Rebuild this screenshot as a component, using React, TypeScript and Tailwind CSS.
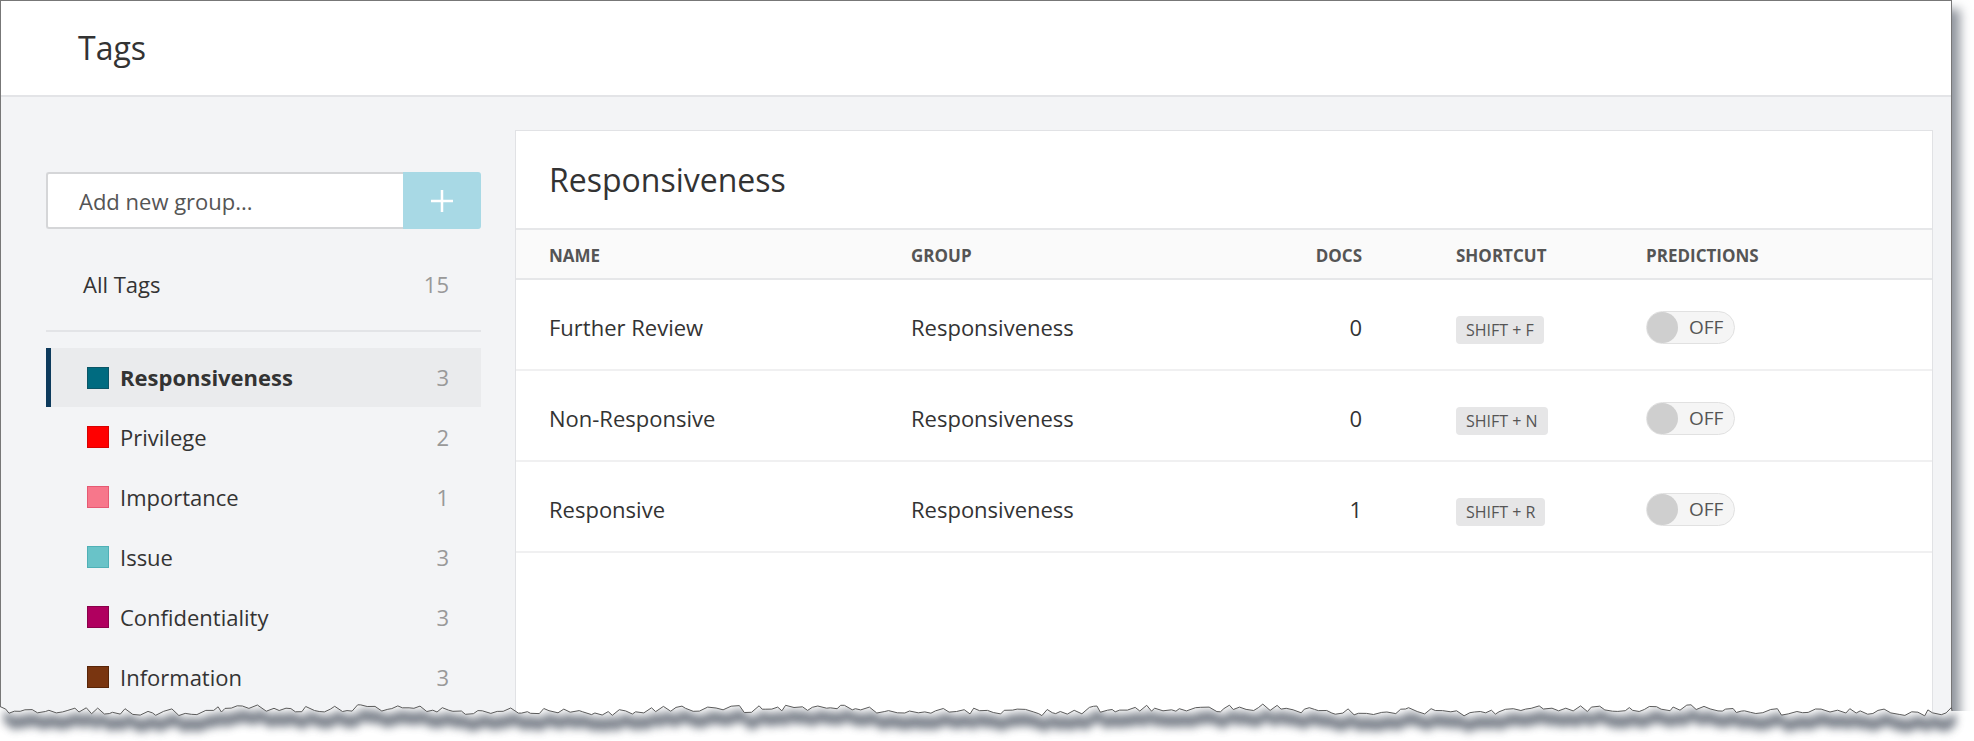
import React from 'react'

const groups = [
  { name: 'Responsiveness', count: 3, fill: 'bg-[#006b80]', edge: 'border-[#0b5566]', active: true },
  { name: 'Privilege', count: 2, fill: 'bg-[#ff0000]', edge: 'border-[#d80000]' },
  { name: 'Importance', count: 1, fill: 'bg-[#f7778b]', edge: 'border-[#e65a73]' },
  { name: 'Issue', count: 3, fill: 'bg-[#69c3c8]', edge: 'border-[#4fb0b6]' },
  { name: 'Confidentiality', count: 3, fill: 'bg-[#b0005f]', edge: 'border-[#8a004b]' },
  { name: 'Information', count: 3, fill: 'bg-[#793510]', edge: 'border-[#582508]' },
]

const tags = [
  { name: 'Further Review', docs: 0, key: 'F' },
  { name: 'Non-Responsive', docs: 0, key: 'N' },
  { name: 'Responsive', docs: 1, key: 'R' },
]

// jagged "torn paper" edge along the bottom of the screenshot
function tornEdge() {
  let seed = 11
  const rnd = () => {
    seed = (seed * 16807) % 2147483647
    return seed / 2147483647
  }
  const pts: [number, number][] = []
  let x = 0
  while (x < 1954) {
    const y = 18 + (rnd() - 0.5) * 7 + Math.sin(x / 70) * 2 + Math.sin(x / 23) * 1.2
    pts.push([x, y])
    x += 3 + rnd() * 6
  }
  pts.push([1952, 19])
  const line = pts.map((p, i) => `${i ? 'L' : 'M'}${p[0].toFixed(1)} ${p[1].toFixed(1)}`).join(' ')
  const area = `${line} L1974 19 L1974 60 L0 60 Z`
  const top = pts.map((p) => `${(p[0] + 4).toFixed(1)} ${(p[1] + 4).toFixed(1)}`)
  const bottom = pts
    .slice()
    .reverse()
    .map((p) => `${(p[0] + 4).toFixed(1)} ${(p[1] + 17).toFixed(1)}`)
  const shadow = `M${[...top, ...bottom].join(' L')} Z`
  return { line, area, shadow }
}

function TornEdge() {
  const { line, area, shadow } = tornEdge()
  return (
    <svg className="absolute left-0 top-[692px]" width="1974" height="60" viewBox="0 0 1974 60">
      <defs>
        <filter id="blur" x="-5%" y="-100%" width="110%" height="300%">
          <feGaussianBlur stdDeviation="4.5" />
        </filter>
        <clipPath id="below">
          <path d={area} />
        </clipPath>
      </defs>
      <path d={area} fill="#ffffff" />
      <g clipPath="url(#below)">
        <path d={shadow} fill="#5d6571" opacity="0.8" filter="url(#blur)" />
      </g>
      <path d={line} fill="none" stroke="#5a5a5a" strokeWidth="1" />
    </svg>
  )
}

function Toggle() {
  return (
    <div className="flex h-[33px] w-[89px] items-center rounded-full border border-[#e1e1e1] bg-[#f5f5f5]">
      <div className="h-[31px] w-[31px] rounded-full bg-[#cfcfcf]" />
      <span className="ml-[11px] text-[19px] text-[#555]">OFF</span>
    </div>
  )
}

export default function App() {
  return (
    <div className="relative h-[741px] w-[1974px] overflow-hidden bg-white font-['Open_Sans',sans-serif] text-[#333]">
      <div className="flex h-[741px] w-[1952px] flex-col border border-[#777] bg-white shadow-[8px_9px_10px_rgba(70,78,92,0.6)]">
        {/* page header */}
        <div className="flex h-[96px] shrink-0 items-center border-b-2 border-[#e3e4e7] pl-[77px]">
          <h1 className="text-[32px] leading-none">Tags</h1>
        </div>

        <div className="flex flex-1 gap-[34px] bg-[#f3f4f6] pl-[45px] pr-[18px] pt-[33px]">
          {/* group list */}
          <div className="w-[435px] shrink-0 pt-[42px]">
            <div className="flex h-[57px]">
              <div className="flex flex-1 items-center rounded-l-[3px] border-2 border-r-0 border-[#d5d6d8] bg-white pl-[31px] pt-[2px] text-[22px] text-[#555]">
                Add new group...
              </div>
              <button className="flex w-[78px] items-center justify-center rounded-r-[3px] bg-[#a8d9e5]">
                <svg width="24" height="24" viewBox="0 0 24 24">
                  <path d="M12 1v22M1 12h22" stroke="#fff" strokeWidth="2.5" />
                </svg>
              </button>
            </div>

            <div className="mt-[25px] flex h-[60px] items-center justify-between pl-[37px] pr-[32px] text-[22px]">
              <span>All Tags</span>
              <span className="text-[#999]">15</span>
            </div>
            <div className="mt-[16px] h-[2px] bg-[#e3e4e7]" />

            <div className="mt-[16px]">
              {groups.map((g) => (
                <div
                  key={g.name}
                  className={
                    g.active
                      ? 'flex h-[59px] items-center justify-between border-l-[5px] border-[#0d3a5c] bg-[#eaebed] pl-[36px] pr-[32px] text-[22px]'
                      : 'flex h-[60px] items-center justify-between pl-[41px] pr-[32px] text-[22px]'
                  }
                >
                  <div className="flex items-center gap-[11px]">
                    <span className={`h-[22px] w-[22px] border ${g.fill} ${g.edge}`} />
                    <span className={g.active ? 'font-bold text-[#333]' : ''}>{g.name}</span>
                  </div>
                  <span className="text-[#999]">{g.count}</span>
                </div>
              ))}
            </div>
          </div>

          {/* tag table */}
          <div className="flex-1 self-start border border-[#e1e2e5] bg-white">
            <div className="flex h-[97px] items-center pl-[33px]">
              <h2 className="text-[32px] leading-none">Responsiveness</h2>
            </div>
            <div className="grid h-[52px] grid-cols-[362px_339px_112px_284px_1fr] items-center border-y-2 border-[#e6e7e9] bg-[#fafafa] pl-[33px] pt-[3px] text-[17px] font-bold text-[#555]">
              <span>NAME</span>
              <span>GROUP</span>
              <span className="text-right">DOCS</span>
              <span className="pl-[94px]">SHORTCUT</span>
              <span>PREDICTIONS</span>
            </div>
            {tags.map((t) => (
              <div
                key={t.name}
                className="grid h-[91px] grid-cols-[362px_339px_112px_284px_1fr] items-center border-b-2 border-[#f0f0f1] pl-[33px] pt-[5px] text-[22px]"
              >
                <span>{t.name}</span>
                <span>Responsiveness</span>
                <span className="text-right">{t.docs}</span>
                <span className="pl-[94px]">
                  <span className="inline-flex h-[28px] items-center rounded-[4px] bg-[#e6e6e7] px-[10px] text-[16px] text-[#555]">
                    SHIFT + {t.key}
                  </span>
                </span>
                <span>
                  <Toggle />
                </span>
              </div>
            ))}
            <div className="h-[300px]" />
          </div>
        </div>
      </div>
      <TornEdge />
    </div>
  )
}
